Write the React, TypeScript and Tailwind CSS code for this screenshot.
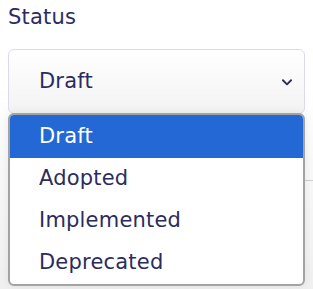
import React from "react";

const options = ["Draft", "Adopted", "Implemented", "Deprecated"];

const App = () => {
  return (
    <div className="relative h-[289px] w-[313px] overflow-hidden bg-gradient-to-b from-white from-30% to-[#f0f0f0] px-2 font-['DejaVu_Sans',sans-serif] tracking-[0.2px] text-[#2b2c5e]">
      <div className="pt-[3px] text-[21px] leading-[28px]">Status</div>
      <div className="relative mt-[18px]">
        <div className="flex h-[65px] w-[297px] items-center justify-between rounded-md border border-[#dcd8f2] bg-gradient-to-b from-white to-[#f3f3f3] pl-[30px] pr-[10px] text-[21px]">
          <span>Draft</span>
          <svg width="14" height="14" viewBox="0 0 24 24" fill="none" stroke="currentColor" strokeWidth="3.2" strokeLinecap="round" strokeLinejoin="round">
            <path d="M5 9l7 7 7-7" />
          </svg>
        </div>
        {/* next field's edge, mostly hidden behind the list */}
        <div className="-mr-2 mt-[66px] border-t border-[#cfcfcf]" />
        {/* open options list */}
        <div className="absolute left-0 top-[64px] w-[297px] overflow-hidden rounded-md border-2 border-[#a3a3a3] bg-white shadow-[0_0_10px_rgba(0,0,0,0.08)]">
          {options.map((o, i) => (
            <div
              key={o}
              className={
                i === 0
                  ? "flex h-[43px] items-center bg-[#2468d5] pl-[29px] text-[21px] text-white"
                  : "flex h-[42px] items-center pl-[29px] text-[21px]"
              }
            >
              {o}
            </div>
          ))}
        </div>
      </div>
    </div>
  );
};

export default App;
